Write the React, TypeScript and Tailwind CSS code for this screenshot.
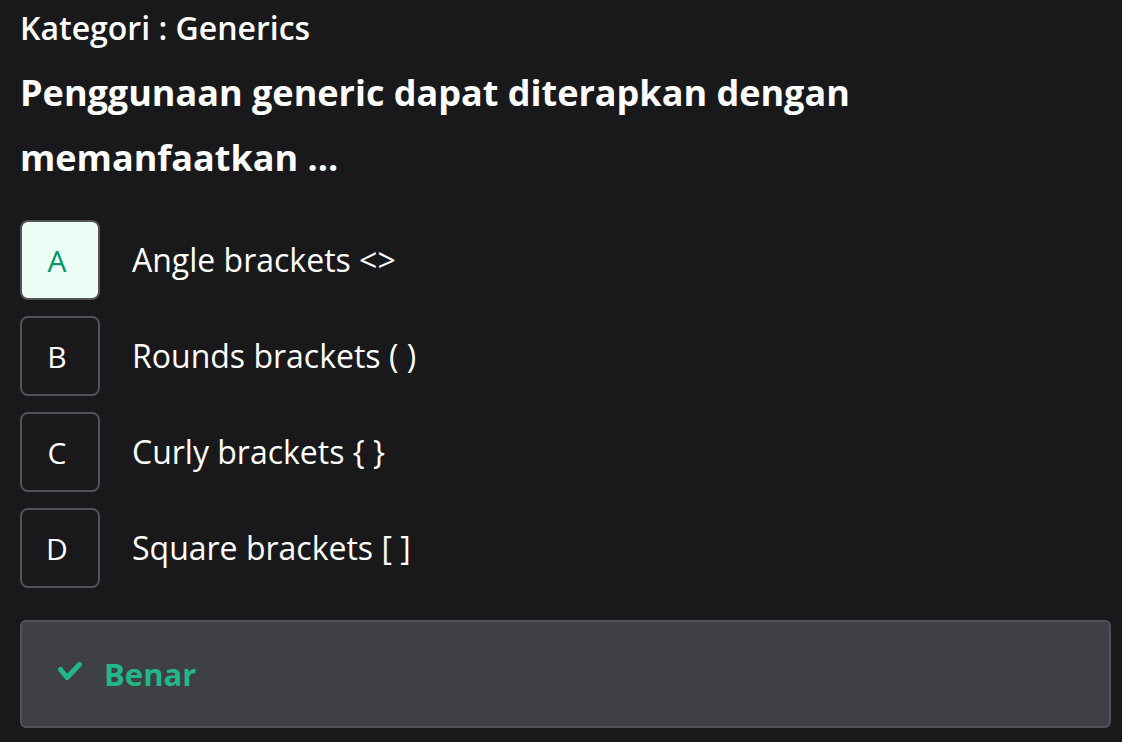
const options = [
  { key: 'A', text: 'Angle brackets <>', correct: true },
  { key: 'B', text: 'Rounds brackets ( )' },
  { key: 'C', text: 'Curly brackets { }' },
  { key: 'D', text: 'Square brackets [ ]' },
]

function CheckMark() {
  return (
    <svg width="24" height="18" viewBox="0 0 24 18" fill="none" className="mb-[6px]">
      <polyline
        points="2.5,7.5 9,15.5 21.5,2.5"
        stroke="currentColor"
        strokeWidth="5"
        strokeLinecap="round"
        strokeLinejoin="round"
      />
    </svg>
  )
}

export default function App() {
  return (
    <div
      className="min-h-screen bg-[#19191b] text-white pl-5 pr-[11px] pt-2"
      style={{ fontFamily: '"Open Sans", "Noto Sans", sans-serif' }}
    >
      <p className="text-[32px] font-semibold leading-[40px]">Kategori : Generics</p>
      <h1 className="mt-3 text-[36px] font-bold leading-[65px] max-w-[900px]">
        Penggunaan generic dapat diterapkan dengan memanfaatkan ...
      </h1>

      <div className="mt-[30px] flex flex-col gap-4">
        {options.map((o) => (
          <div key={o.key} className="flex items-center gap-8">
            <div
              className={
                o.correct
                  ? 'w-20 h-20 pr-[6px] rounded-lg border-2 border-[#52525b] bg-[#ecfdf5] text-[#059669] flex items-center justify-center text-[30px]'
                  : 'w-20 h-20 pr-[6px] rounded-lg border-2 border-[#52525b] bg-[#19191b] text-white flex items-center justify-center text-[30px]'
              }
            >
              {o.key}
            </div>
            <span className="text-[32px]">{o.text}</span>
          </div>
        ))}
      </div>

      <div className="mt-8 h-[108px] rounded-md border-2 border-[#52525b] bg-[#3f3f46] flex items-center pl-[36px] gap-[22px] text-[#22b886]">
        <CheckMark />
        <span className="text-[31px] font-bold">Benar</span>
      </div>
    </div>
  )
}
